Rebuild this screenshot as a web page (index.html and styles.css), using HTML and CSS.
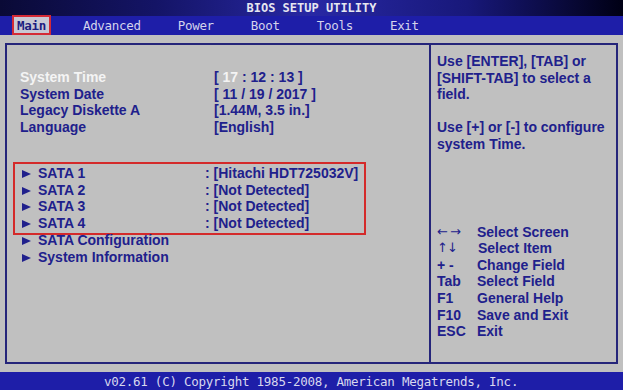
FILE: index.html
```html
<!DOCTYPE html>
<html>
<head>
<meta charset="utf-8">
<link rel="stylesheet" href="styles.css">
</head>
<body>
<div class="titlebar">BIOS SETUP UTILITY</div>
<div class="menubar">
  <span class="tab active">Main</span>
  <span class="tab">Advanced</span>
  <span class="tab">Power</span>
  <span class="tab">Boot</span>
  <span class="tab">Tools</span>
  <span class="tab">Exit</span>
</div>
<div class="main">
  <div class="box">
    <div class="left">
      <div class="row"><span class="sel">System Time</span><span>[ <span class="sel">17</span> : 12 : 13 ]</span></div>
      <div class="row"><span>System Date</span><span>[ 11 / 19 / 2017 ]</span></div>
      <div class="row"><span>Legacy Diskette A</span><span>[1.44M, 3.5 in.]</span></div>
      <div class="row"><span>Language</span><span>[English]</span></div>
      <div class="sata">
        <div class="srow"><span><i class="arrow"></i>SATA 1</span><span>: [Hitachi HDT725032V]</span></div>
        <div class="srow"><span><i class="arrow"></i>SATA 2</span><span>: [Not Detected]</span></div>
        <div class="srow"><span><i class="arrow"></i>SATA 3</span><span>: [Not Detected]</span></div>
        <div class="srow"><span><i class="arrow"></i>SATA 4</span><span>: [Not Detected]</span></div>
      </div>
      <div class="sub"><i class="arrow"></i>SATA Configuration</div>
      <div class="sub"><i class="arrow"></i>System Information</div>
    </div>
    <div class="right">
      <div class="help">Use [ENTER], [TAB] or<br>[SHIFT-TAB] to select a<br>field.<br><br>Use [+] or [-] to configure<br>system Time.</div>
      <div class="keys">
        <span class="k thin wide">&larr;&rarr;</span><span>Select Screen</span>
        <span class="k thin">&uarr;&darr;</span><span class="nudge">Select Item</span>
        <span class="k">+ -</span><span>Change Field</span>
        <span class="k">Tab</span><span>Select Field</span>
        <span class="k">F1</span><span>General Help</span>
        <span class="k">F10</span><span>Save and Exit</span>
        <span class="k">ESC</span><span>Exit</span>
      </div>
    </div>
  </div>
</div>
<div class="footer">v02.61 (C) Copyright 1985-2008, American Megatrends, Inc.</div>
</body>
</html>
```
FILE: styles.css
```css
html, body {
  margin: 0;
  padding: 0;
}
body {
  width: 623px;
  height: 390px;
  overflow: hidden;
  background: #c0c0c0;
  display: flex;
  flex-direction: column;
}
.titlebar {
  height: 16px;
  line-height: 17px;
  text-align: center;
  font-family: "DejaVu Sans Mono", monospace;
  font-weight: bold;
  font-size: 12px;
  color: #e6e6f0;
  background: linear-gradient(to right, #0a0a36 0%, #141466 25%, #2828a4 50%, #18187a 75%, #000014 100%);
}
.menubar {
  height: 19px;
  background: #1e1ea8;
  display: flex;
  align-items: flex-start;
  gap: 31px;
  padding: 1px 0 0 14px;
  box-sizing: border-box;
  font-family: "DejaVu Sans Mono", monospace;
  font-size: 12.5px;
  letter-spacing: -0.3px;
  color: #d4d4ec;
}
.tab {
  height: 16px;
  line-height: 17px;
  padding: 0 3px;
}
.tab.active {
  background: #c8c8d4;
  color: #1c1c80;
  outline: 2px solid #d42a36;
  font-weight: bold;
}
.main {
  flex: 1;
  padding: 8px 5px 8px 5px;
  display: flex;
}
.box {
  flex: 1;
  display: flex;
  border: 2px solid #25257a;
  font-family: "Liberation Sans", Arial, sans-serif;
  font-weight: bold;
  font-size: 14px;
  color: #20208c;
}
.left {
  width: 422px;
  padding: 24px 0 0 13px;
  box-sizing: border-box;
  line-height: 16.6px;
}
.row {
  display: grid;
  grid-template-columns: 194px 1fr;
}
.sel {
  color: #f4f4f4;
}
.sata {
  margin: 26.7px 0 -3px -7px;
  width: 353px;
  box-sizing: border-box;
  border: 2px solid #d42a2a;
  padding: 1px 0 2px 5px;
}
.srow {
  display: grid;
  grid-template-columns: 185px 1fr;
}
.arrow {
  display: inline-block;
  width: 0;
  height: 0;
  border-left: 9px solid #20208c;
  border-top: 4.5px solid transparent;
  border-bottom: 4.5px solid transparent;
  margin: 0 7px 0 2px;
  vertical-align: 0px;
}
.right {
  flex: 1;
  border-left: 2px solid #25257a;
  padding: 8px 0 0 6px;
  line-height: 16.6px;
}
.keys {
  margin-top: 71px;
  display: grid;
  grid-template-columns: 40px 1fr;
}
.k.thin {
  font-family: "DejaVu Sans", sans-serif;
  font-weight: normal;
  font-size: 13px;
  letter-spacing: -1px;
}
.k.thin.wide {
  letter-spacing: 2px;
}
.nudge {
  padding-left: 1px;
}
.footer {
  height: 18px;
  line-height: 19px;
  background: #1e1ea8;
  color: #d8d8ee;
  font-family: "DejaVu Sans Mono", monospace;
  font-size: 12.5px;
  letter-spacing: -0.26px;
  padding-left: 104px;
  white-space: nowrap;
}
```
